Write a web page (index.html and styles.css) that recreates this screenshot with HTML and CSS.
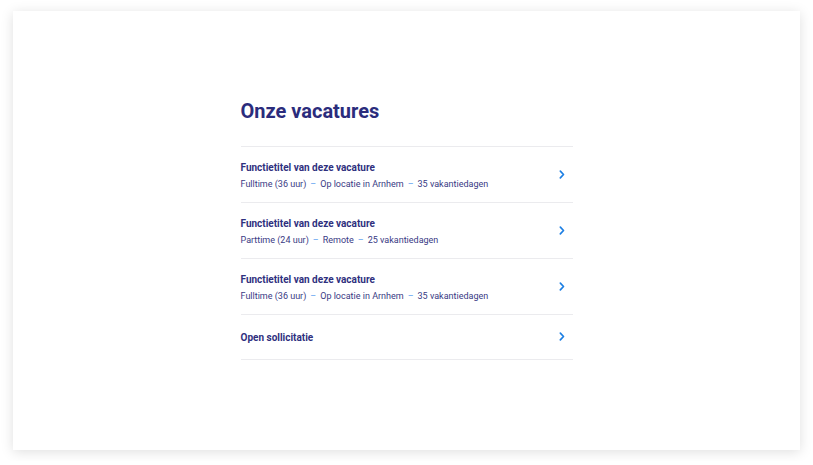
FILE: index.html
```html
<!DOCTYPE html>
<html lang="nl">
<head>
<meta charset="utf-8">
<title>Onze vacatures</title>
<link rel="stylesheet" href="styles.css">
</head>
<body>
<main class="card">
  <section class="vacancies">
    <h1 class="title">Onze vacatures</h1>
    <ul class="list">
      <li class="item">
        <div class="text">
          <div class="name">Functietitel van deze vacature</div>
          <div class="meta">Fulltime (36 uur)<span class="sep">–</span>Op locatie in Arnhem<span class="sep">–</span>35 vakantiedagen</div>
        </div>
        <svg class="chev" viewBox="0 0 8 12" width="6" height="9"><path d="M1.8 1.5 L6 6 L1.8 10.5" fill="none" stroke="#1d7fe3" stroke-width="2.2" stroke-linecap="round" stroke-linejoin="round"/></svg>
      </li>
      <li class="item">
        <div class="text">
          <div class="name">Functietitel van deze vacature</div>
          <div class="meta">Parttime (24 uur)<span class="sep">–</span>Remote<span class="sep">–</span>25 vakantiedagen</div>
        </div>
        <svg class="chev" viewBox="0 0 8 12" width="6" height="9"><path d="M1.8 1.5 L6 6 L1.8 10.5" fill="none" stroke="#1d7fe3" stroke-width="2.2" stroke-linecap="round" stroke-linejoin="round"/></svg>
      </li>
      <li class="item">
        <div class="text">
          <div class="name">Functietitel van deze vacature</div>
          <div class="meta">Fulltime (36 uur)<span class="sep">–</span>Op locatie in Arnhem<span class="sep">–</span>35 vakantiedagen</div>
        </div>
        <svg class="chev" viewBox="0 0 8 12" width="6" height="9"><path d="M1.8 1.5 L6 6 L1.8 10.5" fill="none" stroke="#1d7fe3" stroke-width="2.2" stroke-linecap="round" stroke-linejoin="round"/></svg>
      </li>
      <li class="item single">
        <div class="text">
          <div class="name">Open sollicitatie</div>
        </div>
        <svg class="chev" viewBox="0 0 8 12" width="6" height="9"><path d="M1.8 1.5 L6 6 L1.8 10.5" fill="none" stroke="#1d7fe3" stroke-width="2.2" stroke-linecap="round" stroke-linejoin="round"/></svg>
      </li>
    </ul>
  </section>
</main>
</body>
</html>
```
FILE: styles.css
```css
* { box-sizing: border-box; }
html, body { margin: 0; padding: 0; }
body {
  background: #ffffff;
  font-family: Roboto, "Liberation Sans", Arial, sans-serif;
  color: #2b2c7c;
  padding: 11px 13px;
}
.card {
  width: 787px;
  height: 439px;
  background: #ffffff;
  box-shadow: 0 2px 12px rgba(0, 0, 0, 0.13);
  display: flex;
  justify-content: center;
  padding-top: 86px;
}
.vacancies {
  width: 332px;
}
.title {
  margin: 0;
  font-size: 20px;
  line-height: 28px;
  font-weight: 700;
  color: #2b2c7c;
  padding-bottom: 21px;
  border-bottom: 1px solid #ebebee;
}
.list {
  list-style: none;
  margin: 0;
  padding: 0;
}
.item {
  display: flex;
  align-items: center;
  justify-content: space-between;
  padding: 12px 8px 11px 0;
  border-bottom: 1px solid #ebebee;
  height: 56px;
}
.item.single {
  height: 45px;
  padding-top: 14px;
  padding-bottom: 14px;
}
.name {
  font-size: 10px;
  line-height: 17px;
  font-weight: 700;
  color: #2f307e;
}
.meta {
  font-size: 9px;
  line-height: 16px;
  color: #393a84;
}
.sep {
  color: #5a9ef0;
  margin: 0 4px;
}
.chev { display: block; margin-top: -1px; }
```
